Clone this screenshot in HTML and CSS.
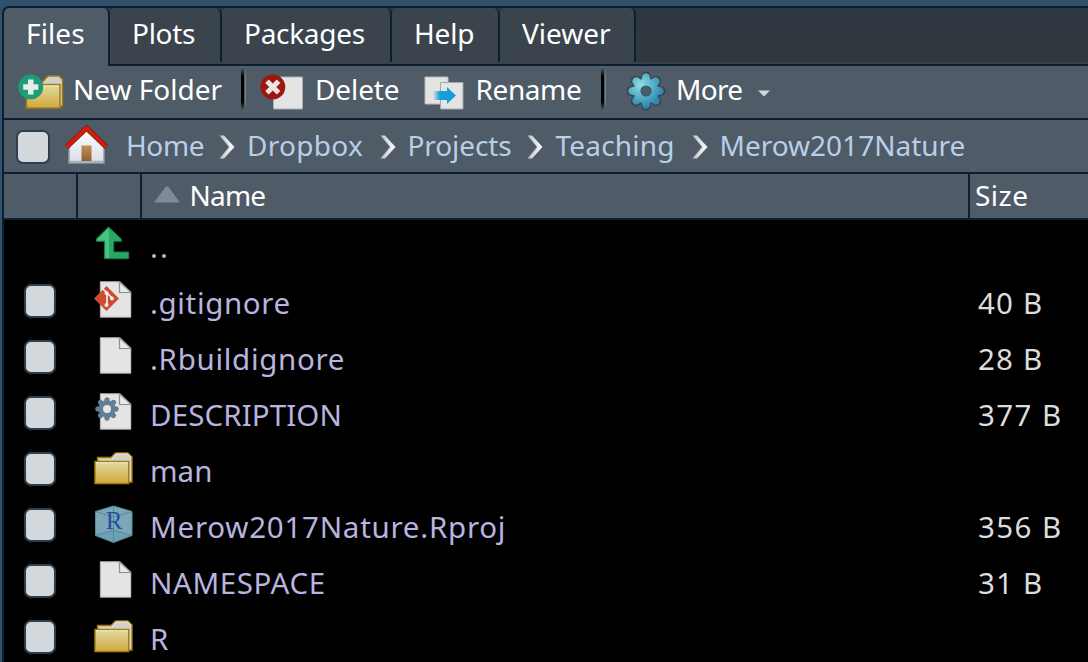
FILE: index.html
```html
<!DOCTYPE html>
<html lang="en">
<head>
<meta charset="utf-8">
<title>Files</title>
<link rel="stylesheet" href="styles.css">
</head>
<body>
<svg class="defs" width="0" height="0" aria-hidden="true">
  <defs>
    <linearGradient id="gold" x2="0" y2="1"><stop stop-color="#dfdca3"/><stop offset="1" stop-color="#d2a83c"/></linearGradient>
    <linearGradient id="wall" x2="0" y2="1"><stop stop-color="#fff"/><stop offset="1" stop-color="#d9dde5"/></linearGradient>
    <linearGradient id="door" x2="0" y2="1"><stop stop-color="#c49058"/><stop offset="1" stop-color="#8e5f35"/></linearGradient>
    <linearGradient id="slide"><stop stop-color="#159fd6" stop-opacity="0"/><stop offset=".3" stop-color="#159fd6"/></linearGradient>
    <radialGradient id="teal" gradientUnits="userSpaceOnUse" cx="-5" cy="-6" r="22"><stop stop-color="#8fdfe3"/><stop offset="1" stop-color="#2f88b0"/></radialGradient>
    <linearGradient id="chev"><stop stop-color="#bfc2c5"/><stop offset="1" stop-color="#fff"/></linearGradient>
    <g id="gear-shape">
      <circle r="12.5"/>
      <g id="teeth4">
        <path id="tooth" d="M-5-11L-3.500-17Q0-20.500 3.500-17L5-11V11L3.500 17Q0 20.500-3.500 17L-5 11Z"/>
        <use href="#tooth" transform="rotate(90)"/>
      </g>
      <use href="#teeth4" transform="rotate(45)"/>
    </g>
    <mask id="gear-mask" maskUnits="userSpaceOnUse" x="-20" y="-20" width="40" height="40">
      <use href="#gear-shape" fill="#fff" transform="scale(.95)"/>
    </mask>
    <symbol id="folder" viewBox="0 0 40 34">
      <path d="M3.500 9V6.500H17L21.500 2H34L38 6V31H34L12 20Z" fill="#d0d0cd" stroke="#a77c0b" stroke-width="1.300"/>
      <path d="M18 7L22 3H33.500L37 6.500" fill="none" stroke="#ededec" stroke-width="1"/>
      <path d="M1 10.500H34.700V32.500H1Z" fill="url(#gold)" stroke="#a77c0b" stroke-width="1.400"/>
      <path d="M2 11.700H33.700" stroke="#eee9bd"/>
    </symbol>
    <symbol id="page" viewBox="0 0 32 37">
      <path d="M.7.700H20.500L31.500 11.500V36.200H.7Z" fill="#e4e4e4" stroke="#aaa"/>
      <path d="M20 .7V11.500H31.500Z" fill="#e9e9e9" stroke="#8f8f8f" stroke-width="1.200"/>
    </symbol>
    <symbol id="chevron" viewBox="0 0 16 24">
      <path d="M.5 .5H5L15.500 12 5 23.500H.5L10 12Z" fill="url(#chev)"/>
      <path d="M.5 .5L10 12 .5 23.500" fill="none" stroke="#7d868d" stroke-width=".6"/>
    </symbol>
  </defs>
</svg>

<div class="pane">
  <nav class="tabs">
    <a class="tab active t-files">Files</a>
    <a class="tab t-plots">Plots</a>
    <a class="tab t-packages">Packages</a>
    <a class="tab t-help">Help</a>
    <a class="tab t-viewer">Viewer</a>
  </nav>

  <div class="toolbar">
    <div class="button new">
      <svg width="48" height="38" viewBox="0 0 48 38">
        <path d="M16 18L30 3H41L44.500 6.500V33H38L20 25Z" fill="#d0d0cd" stroke="#a77c0b" stroke-width="1.400"/>
        <path d="M8.500 11.500H42V35H8.500Z" fill="url(#gold)" stroke="#a77c0b" stroke-width="1.500"/>
        <path d="M10 13H40.500" stroke="#eee9bd"/>
        <circle cx="12.700" cy="14" r="12.500" fill="#1d9c77"/>
        <path d="M10 6.500H15.500V11.300H20.300V16.800H15.500V21.500H10V16.800H5.200V11.300H10Z" fill="#e3eeea"/>
      </svg>
      <span>New Folder</span>
    </div>
    <i class="divider"></i>
    <div class="button delete">
      <svg width="44" height="38" viewBox="0 0 44 38">
        <path d="M13.500 4H42.500V36H13.500Z" fill="#e4e4e4" stroke="#a9b0b8"/>
        <circle cx="12.800" cy="14" r="12.500" fill="#9b1712"/>
        <path d="M7 8.200L18.600 19.800M18.600 8.200L7 19.800" stroke="#eee4e4" stroke-width="5"/>
      </svg>
      <span>Delete</span>
    </div>
    <div class="button rename">
      <svg width="42" height="38" viewBox="0 0 42 38">
        <path d="M2 4H25V31H2Z" fill="#e4e4e4" stroke="#b9b9b9"/>
        <path d="M17.500 9.500H40V36H17.500Z" fill="#e4e4e4" stroke="#a8a8a8"/>
        <path d="M10 18H24V14L33 22.500 24 31V27H10Z" fill="url(#slide)"/>
      </svg>
      <span>Rename</span>
    </div>
    <i class="divider"></i>
    <div class="button more">
      <svg width="40" height="40" viewBox="-20 -20 40 40">
        <use href="#gear-shape" fill="#34434f" stroke="#34434f" stroke-width="1.500"/>
        <circle r="20" fill="url(#teal)" mask="url(#gear-mask)"/>
        <circle r="5" fill="#4e5b66" stroke="#2c6075" stroke-width="1.200"/>
      </svg>
      <span>More</span>
      <svg class="caret" width="12" height="7" viewBox="0 0 12 7"><path d="M0 .5H12L6 6.500Z" fill="#d5d5d5"/></svg>
    </div>
  </div>

  <div class="pathbar">
    <i class="check all"></i>
    <svg class="home" width="44" height="40" viewBox="0 0 44 40">
      <path d="M4 20L21.500 3 39 20V38H4Z" fill="url(#wall)" stroke="#8d9ca8" stroke-width="1.500"/>
      <path d="M5 36.700H38" stroke="#a8b3b9" stroke-width="2"/>
      <path d="M16.500 20.500H26.500V36H16.500Z" fill="url(#door)"/>
      <path d="M1.500 22L21.500 3 41.500 22" fill="none" stroke="#7d2019" stroke-width="5.200"/>
      <path d="M1.500 22L21.500 3 41.500 22" fill="none" stroke="#d81b08" stroke-width="3.700"/>
    </svg>
    <div class="crumbs">
      <span class="crumb c-home">Home</span><svg class="chevron"><use href="#chevron"/></svg>
      <span class="crumb c-dropbox">Dropbox</span><svg class="chevron"><use href="#chevron"/></svg>
      <span class="crumb c-projects">Projects</span><svg class="chevron"><use href="#chevron"/></svg>
      <span class="crumb c-teaching">Teaching</span><svg class="chevron"><use href="#chevron"/></svg>
      <span class="crumb">Merow2017Nature</span>
    </div>
  </div>

  <div class="columns">
    <div></div><div></div>
    <div class="name-head"><svg width="26" height="17" viewBox="0 0 26 17"><path d="M0 16.500L11.500 1Q13-.5 14.500 1L26 16.500Z" fill="#7f8999"/></svg><span>Name</span></div>
    <div class="size-head"><span>Size</span></div>
  </div>

  <div class="files">
    <div class="row up"><span></span>
      <svg class="icon" width="40" height="36" viewBox="0 0 40 36"><path d="M14.500 2L27.300 14V16.300H19.700V27H34.700V33.700H10.500V16.300H2.300V14Z" fill="#29a764" stroke="#168044"/><path d="M14.500 3L3 14.500V15.500H11.200V33H15V3.500Z" fill="#4bc184"/></svg>
      <span class="name f-up">..</span><span></span></div>
    <div class="row"><i class="check"></i>
      <svg class="icon" width="40" height="38" viewBox="0 0 40 38"><use href="#page" x="5.500" y="1" width="32" height="37"/><path d="M12.500 6L25 18.500 12.500 31 0 18.500Z" fill="#cf4a2e"/><path d="M8 8L13 13V25M13 13L18.500 18.500" fill="none" stroke="#eee" stroke-width="1.700"/><g fill="#eee"><circle cx="12.500" cy="13" r="2"/><circle cx="18" cy="18.500" r="2"/><circle cx="12.500" cy="25" r="2"/></g></svg>
      <span class="name f-git">.gitignore</span><span class="size s-2">40 B</span></div>
    <div class="row"><i class="check"></i>
      <svg class="icon" width="40" height="38"><use href="#page" x="5.500" y="1" width="32" height="37"/></svg>
      <span class="name f-rb">.Rbuildignore</span><span class="size s-2">28 B</span></div>
    <div class="row"><i class="check"></i>
      <svg class="icon" width="40" height="38" viewBox="0 0 40 38"><use href="#page" x="5.500" y="1" width="32" height="37"/><use href="#gear-shape" transform="translate(13 17) scale(.63)" fill="#5e7f97"/><circle cx="13" cy="17" r="4" fill="#e4e4e4"/></svg>
      <span class="name f-desc">DESCRIPTION</span><span class="size s-3">377 B</span></div>
    <div class="row"><i class="check"></i>
      <svg class="icon low" width="40" height="34"><use href="#folder"/></svg>
      <span class="name">man</span><span></span></div>
    <div class="row"><i class="check"></i>
      <svg class="icon low" width="40" height="38" viewBox="0 0 40 38"><path d="M19.500 1L38 6.500V30.500L19.500 37.500 1.500 30.500V6.500Z" fill="#7fa6b8" stroke="#4d93a5"/><path d="M19.500 1V25L38 30.500 19.500 37.500 1.500 30.500 19.500 25Z" fill="#5795a8" opacity=".4"/><path d="M1.500 6.500L19.500 12 38 6.500M19.500 1V37M1.500 30.500L19.500 25 38 30.500" fill="none" stroke="#3a8c99" stroke-width=".8"/><text class="project-letter" x="20" y="24" text-anchor="middle">R</text></svg>
      <span class="name f-proj">Merow2017Nature.Rproj</span><span class="size s-3">356 B</span></div>
    <div class="row"><i class="check"></i>
      <svg class="icon" width="40" height="38"><use href="#page" x="5.500" y="1" width="32" height="37"/></svg>
      <span class="name f-ns">NAMESPACE</span><span class="size s-2">31 B</span></div>
    <div class="row"><i class="check"></i>
      <svg class="icon low" width="40" height="34"><use href="#folder"/></svg>
      <span class="name">R</span><span></span></div>
  </div>
</div>
</body>
</html>
```

FILE: styles.css
```css
* { box-sizing: border-box; }
body {
  margin: 0;
  height: 662px;
  overflow: hidden;
  background: #31506b;
  color: #fff;
  font: 28px/36px "Noto Sans", "Open Sans", sans-serif;
  white-space: nowrap;
}
.defs { position: absolute; }
svg { display: block; flex: none; }

.pane {
  height: 656px;
  margin: 6px 0 0 2px;
  border: solid #0c2033;
  border-width: 2px 0 0 2px;
  border-top-left-radius: 7px;
  background: #000;
  overflow: hidden;
}

.tabs {
  display: flex;
  align-items: flex-start;
  height: 58px;
  background: linear-gradient(#2e3740, #30383f 54px, #38424c 54px, #38424c 56px, #0c2033 56px);
}
.tab {
  height: 54px;
  padding: 7px 0 0 22px;
  border-right: 2px solid #0c2033;
  border-radius: 5px 6px 0 0;
  background: #3b444c;
}
.tab.active { height: 58px; background: #4f5b66; }
.t-files { width: 106px; letter-spacing: .1px; }
.t-plots { width: 112px; letter-spacing: -.3px; }
.t-packages { width: 170px; letter-spacing: -.3px; }
.t-help { width: 108px; letter-spacing: -.2px; }
.t-viewer { width: 136px; }

.toolbar {
  display: flex;
  height: 54px;
  padding-left: 14px;
  background: #4f5b66;
  border-bottom: 2px solid #0c2033;
}
.button { display: flex; align-items: center; height: 50px; }
.button span { padding-bottom: 4px; }
.new { width: 223px; }
.new svg { margin-top: 1px; }
.new span { margin-left: 7px; }
.delete { width: 177px; padding-left: 14px; }
.delete span { margin-left: 11px; letter-spacing: -.1px; }
.delete svg, .rename svg { margin-top: 1px; }
.rename { width: 178px; }
.rename span { margin-left: 10.5px; letter-spacing: -.4px; }
.more { padding-left: 20px; }
.more span { margin-left: 10px; letter-spacing: -.7px; }
.more .caret { margin: 4px 0 0 16px; }
.divider {
  width: 5px;
  height: 42px;
  margin-top: 2px;
  background: linear-gradient(90deg, #000 0 3px, transparent 3px 4px, #737d86 4px);
  -webkit-mask-image: linear-gradient(transparent, #000 20%, #000 80%, transparent);
  mask-image: linear-gradient(transparent, #000 20%, #000 80%, transparent);
}

.pathbar {
  display: flex;
  align-items: center;
  height: 54px;
  padding-left: 12px;
  background: #4f5b66;
  border-bottom: 2px solid #0c2033;
}
.check {
  width: 32px;
  height: 34px;
  border: 2px solid #2e3e4e;
  border-radius: 7px;
  background: #d3d8dc;
}
.check.all { width: 34px; margin-top: 2px; }
.home { margin: 0 17.5px 2px 14.5px; }
.crumbs { display: flex; align-items: center; color: #b9cfe9; }
.crumb { height: 38px; }
.c-home { width: 93px; letter-spacing: -.4px; }
.c-dropbox { width: 132.5px; letter-spacing: .3px; }
.c-projects { width: 119.5px; letter-spacing: -.1px; }
.c-teaching { width: 136.5px; padding-left: .5px; letter-spacing: .2px; }
.chevron { width: 16px; height: 24px; margin: 2px 12px 0 0; }

.columns {
  display: grid;
  grid-template-columns: 74px 64px 828px 1fr;
  height: 46px;
  background: #4f5b66;
  border-bottom: 2px solid #0c2033;
}
.columns > div:not(:last-child) { border-right: 2px solid #0c2033; }
.name-head { display: flex; padding: 3px 0 0 12px; letter-spacing: -.8px; }
.name-head svg { margin: 9px 9.5px 0 0; }
.size-head { padding: 3px 0 0 5px; letter-spacing: .5px; }

.files { padding-top: 1px; }
.row {
  display: grid;
  grid-template-columns: 69px 57px 828px 1fr;
  align-items: center;
  height: 56px;
  padding-left: 20px;
  font-size: 29.5px;
}
.row.up { height: 52px; }
.row .icon { margin: 0 0 4px 1px; }
.row .icon.low { margin-bottom: 2px; }
.row.up .icon { margin-bottom: 9px; }
.name { color: #b7b4df; padding-top: 3px; }
.size { color: #dcdcdc; padding-top: 3px; }
.f-up { letter-spacing: 2px; padding-top: 0; }
.f-git { letter-spacing: .65px; }
.f-rb { letter-spacing: .7px; }
.f-desc { letter-spacing: .1px; }
.f-proj { letter-spacing: .75px; }
.f-ns { letter-spacing: .6px; }
.s-2 { letter-spacing: 1.2px; }
.s-3 { letter-spacing: 1.4px; }
.project-letter { font: 25px "Liberation Serif", serif; fill: #26509a; }
```
